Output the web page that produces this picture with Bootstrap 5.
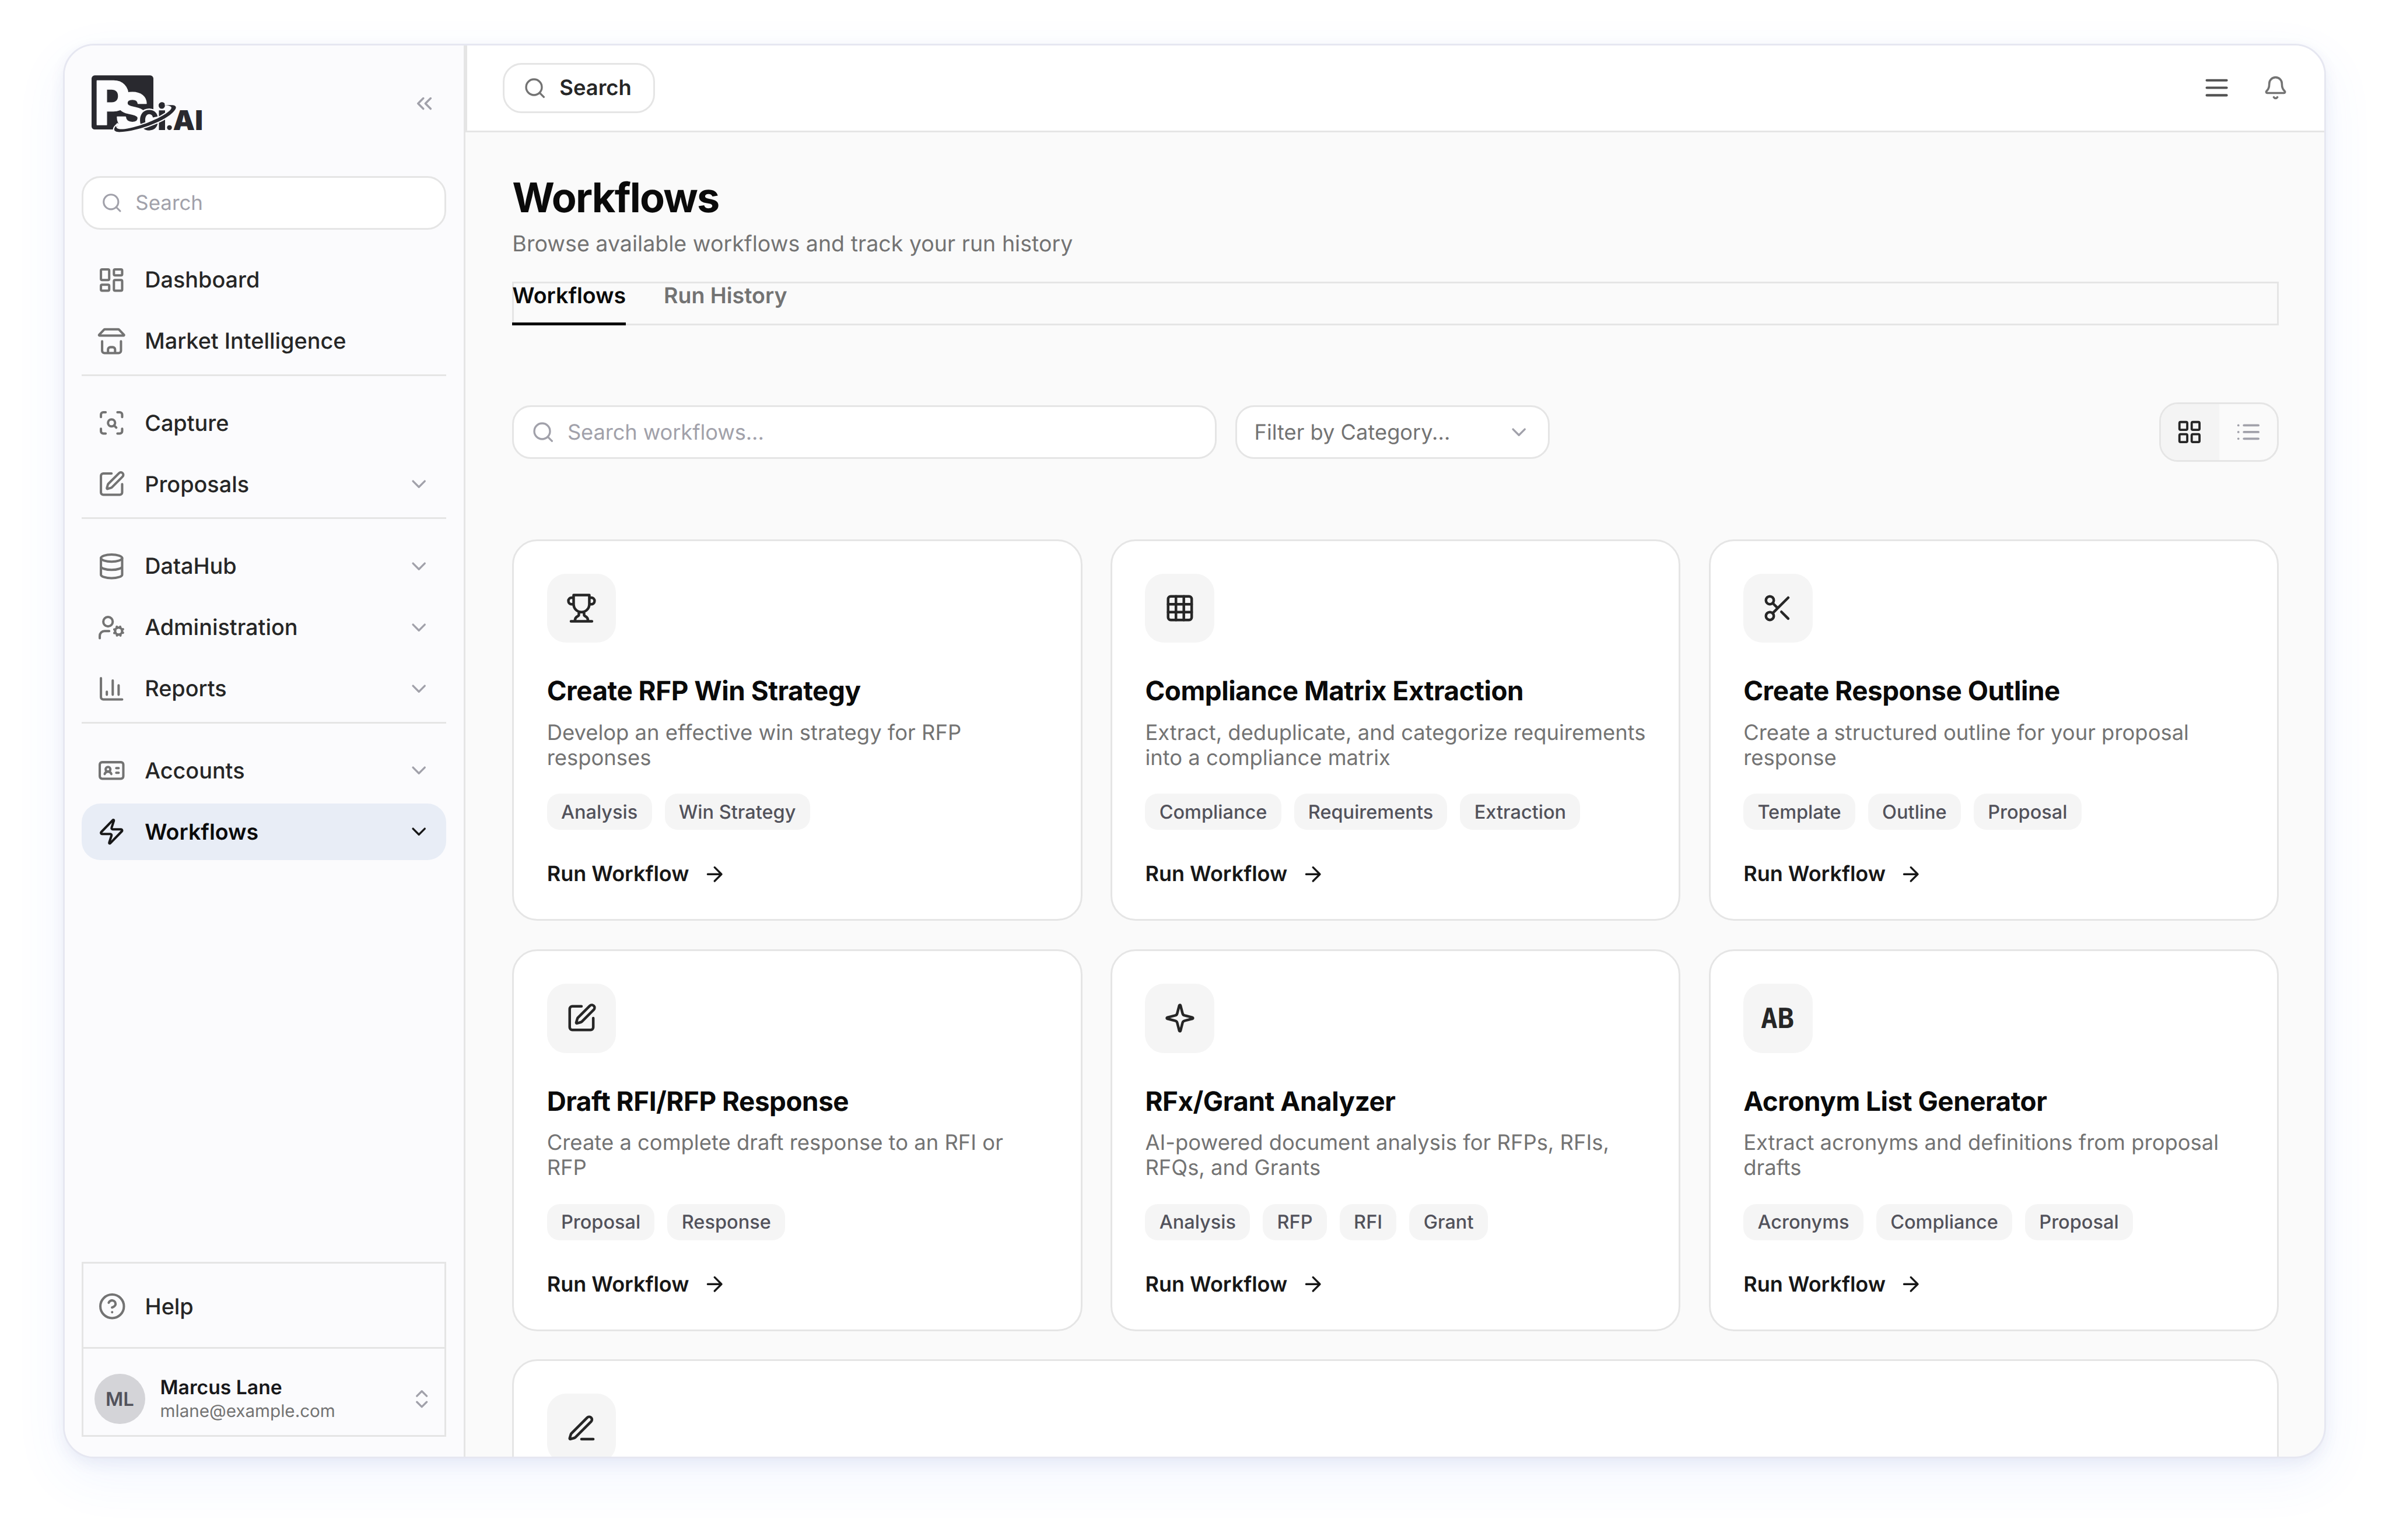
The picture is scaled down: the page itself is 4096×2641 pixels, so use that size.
<!DOCTYPE html>
<html lang="en">
<head>
<meta charset="utf-8">
<meta name="viewport" content="width=device-width, initial-scale=1">
<title>Workflows</title>
<link href="https://cdn.jsdelivr.net/npm/bootstrap@5.3.0/dist/css/bootstrap.min.css" rel="stylesheet">
<style>
  :root { --u: .898246px; --line: #e5e5e5; }
  html { font-size: 43.116px; }
  body { font-family: Inter, "Liberation Sans", sans-serif; color: #262626; background: #fff; width: 4096px; height: 2641px; overflow: hidden; text-rendering: geometricPrecision; line-height: 1.2; }
  .ico { fill: none; stroke: currentColor; stroke-width: 2; stroke-linecap: round; stroke-linejoin: round; flex: none; display: block; }
  .i42 { width: calc(42*var(--u)); height: calc(42*var(--u)); }
  .i45 { width: calc(45*var(--u)); height: calc(45*var(--u)); }
  .i48 { width: calc(48*var(--u)); height: calc(48*var(--u)); }
  .i51 { width: calc(51*var(--u)); height: calc(51*var(--u)); }
  .i54 { width: calc(54*var(--u)); height: calc(54*var(--u)); }
  .i57 { width: calc(57*var(--u)); height: calc(57*var(--u)); stroke-width: 1.9; }
  .i60 { width: calc(60*var(--u)); height: calc(60*var(--u)); }

  .stage { padding: calc(84*var(--u)) calc(120*var(--u)) 0; }
  .app-frame { height: calc(2700*var(--u)); border: 3px solid #e6e7f1; border-radius: calc(60*var(--u)); background: #fafafa; box-shadow: 0 9px 24px rgba(50,70,130,.075), 0 32px 90px rgba(70,125,255,.075); }

  .side { width: calc(765*var(--u)); background: #fbfbfd; border-right: 3px solid var(--line); padding: calc(56*var(--u)) calc(33*var(--u)) calc(38*var(--u)); flex: none; }
  .side-head { padding: 0 calc(18*var(--u)); margin-bottom: calc(84*var(--u)); height: calc(109*var(--u)); }
  .logo { width: calc(210.7*var(--u)); height: calc(109*var(--u)); display: block; overflow: visible; }
  .box { background: #fff; border: 3px solid var(--line); border-radius: calc(36*var(--u)); height: calc(102*var(--u)); padding: 0 calc(33*var(--u)); gap: calc(24*var(--u)); color: #a1a1aa; }
  .box span { padding-top: calc(1.5*var(--u)); }
  .side .box { font-size: calc(38.8*var(--u)); }
  .side-nav { margin-top: calc(42*var(--u)); gap: calc(9*var(--u)); }
  .item { height: calc(108*var(--u)); padding: 0 calc(30*var(--u)); gap: calc(36*var(--u)); border-radius: calc(36*var(--u)); color: #262626; font-size: calc(42.1*var(--u)); font-weight: 500; text-decoration: none; }
  .item span { padding-top: calc(2.5*var(--u)); }
  .item .ico { color: #737373; }
  .item .chev { color: #a1a1aa; margin-left: auto; }
  .item.active { background: #e8edf6; color: #0a0a0a; font-weight: 600; font-size: calc(41.8*var(--u)); }
  .item.active .ico { color: #171717; }
  .rule { height: 3px; background: var(--line); margin-bottom: calc(27*var(--u)); }
  .side-foot { border: 3px solid var(--line); height: calc(333*var(--u)); }
  .help-row { height: calc(162*var(--u)); padding: calc(27*var(--u)) 0 0; border-bottom: 3px solid var(--line); }
  .help-row .item { padding: 0 calc(27*var(--u)); }
  .user-row { padding: calc(48*var(--u)) calc(21*var(--u)) 0; gap: calc(29*var(--u)); }
  .avatar { width: calc(96*var(--u)); height: calc(96*var(--u)); background: #d4d4d8; color: #52525b; font-size: calc(36.5*var(--u)); font-weight: 600; flex: none; }
  .u-name { font-size: calc(37.5*var(--u)); line-height: calc(48*var(--u)); font-weight: 600; color: #18181b; }
  .u-mail { font-size: calc(33*var(--u)); line-height: calc(44*var(--u)); color: #737373; }

  .topbar { height: calc(165*var(--u)); background: #fff; border-left: 3px solid var(--line); border-bottom: 3px solid var(--line); padding: 0 calc(69*var(--u)) 0 calc(68*var(--u)); }
  .top-search { height: calc(96*var(--u)); width: calc(291*var(--u)); padding: 0 calc(36*var(--u)); gap: calc(24*var(--u)); border: 3px solid var(--line); border-radius: calc(36*var(--u)); background: #fff; color: #262626; font-size: calc(40.5*var(--u)); font-weight: 600; }
  .top-icons { gap: calc(60*var(--u)); }
  .content { padding: calc(80*var(--u)) calc(87*var(--u)) 0 calc(89.500*var(--u)); }
  .page-title { font-size: calc(78*var(--u)); line-height: calc(90*var(--u)); font-weight: 700; letter-spacing: -.025em; color: #0a0a0a; margin: 0; }
  .page-sub { font-size: calc(41.850*var(--u)); line-height: calc(60*var(--u)); color: #737373; margin: calc(14*var(--u)) 0 calc(41*var(--u)); }
  .tabs { border: 3px solid var(--line); height: calc(84*var(--u)); gap: calc(72*var(--u)); font-size: calc(41.8*var(--u)); line-height: calc(48*var(--u)); font-weight: 600; color: #737373; }
  .tabs .on { color: #0a0a0a; border-bottom: 5px solid #0a0a0a; margin: 0 0 -3px -3px; }
  .tools { margin-top: calc(147*var(--u)); height: calc(114*var(--u)); gap: calc(36*var(--u)); font-size: calc(40.4*var(--u)); }
  .find { width: calc(1344*var(--u)); }
  .find span { letter-spacing: -.003em; }
  .pick { width: calc(600*var(--u)); color: #737373; }
  .pick .ico { color: #a1a1aa; }
  .views { height: calc(114*var(--u)); width: calc(228*var(--u)); border: 3px solid var(--line); border-radius: calc(36*var(--u)); overflow: hidden; color: #a1a1aa; }
  .views .on { background: #f4f4f4; color: #262626; width: 50%; padding-right: calc(2*var(--u)); }
  .views .off { width: 50%; padding-left: calc(2*var(--u)); }

  .flows { margin-top: calc(147*var(--u)); display: grid; grid-template-columns: repeat(3, 1fr); gap: calc(54*var(--u)); }
  .flow { height: calc(729*var(--u)); background: #fff; border: 3px solid var(--line); border-radius: calc(48*var(--u)); padding: calc(62.7*var(--u)); }
  .flow.wide { grid-column: 1 / -1; }
  .tile { width: calc(132*var(--u)); height: calc(132*var(--u)); border-radius: calc(36*var(--u)); background: #f5f5f5; color: #262626; }
  .ab { font: bold calc(53*var(--u))/1 "DejaVu Sans Mono", monospace; padding: calc(3*var(--u)) calc(2*var(--u)) 0 0; }
  .flow h2 { font-size: calc(51*var(--u)); line-height: calc(60*var(--u)); font-weight: 700; letter-spacing: -.01em; color: #0a0a0a; margin: calc(63.500*var(--u)) 0 calc(24*var(--u)); }
  .flow p { font-size: calc(40.550*var(--u)); line-height: calc(48*var(--u)); height: calc(96*var(--u)); color: #737373; margin: 0 -10px calc(45*var(--u)) 0; }
  .chips { gap: calc(24.5*var(--u)); }
  .chip { height: calc(69*var(--u)); padding: 0 calc(27*var(--u)); border-radius: calc(24*var(--u)); background: #f5f5f5; color: #52525b; font-size: calc(36.2*var(--u)); font-weight: 500; }
  .run { margin-top: calc(54*var(--u)); height: calc(60*var(--u)); gap: calc(26*var(--u)); color: #171717; font-size: calc(40.100*var(--u)); font-weight: 600; text-decoration: none; }
</style>
<script src="https://cdn.jsdelivr.net/npm/bootstrap@5.3.0/dist/js/bootstrap.bundle.min.js"></script>
</head>
<body>
<svg width="0" height="0" class="d-none">
  <symbol id="search" viewBox="0 0 24 24"><circle cx="11" cy="11" r="8"/><path d="m21 21-4.3-4.3"/></symbol>
  <symbol id="chevs" viewBox="0 0 24 24"><path d="m11 17-5-5 5-5M18 17l-5-5 5-5"/></symbol>
  <symbol id="down" viewBox="0 0 24 24"><path d="m6 9 6 6 6-6"/></symbol>
  <symbol id="updown" viewBox="0 0 24 24"><path d="m7 15 5 5 5-5M7 9l5-5 5 5"/></symbol>
  <symbol id="dash" viewBox="0 0 24 24"><rect width="7" height="9" x="3" y="3" rx="1"/><rect width="7" height="5" x="14" y="3" rx="1"/><rect width="7" height="9" x="14" y="12" rx="1"/><rect width="7" height="5" x="3" y="16" rx="1"/></symbol>
  <symbol id="store" viewBox="0 0 24 24"><path d="M6.4 1.900h11.200a1.200 1.200 0 0 1 .9.4L22.500 6.500a.4.4 0 0 1-.3.7H1.800a.4.4 0 0 1-.3-.7L5.500 2.300a1.200 1.200 0 0 1 .9-.4ZM4 12v8a2 2 0 0 0 2 2h12a2 2 0 0 0 2-2v-8M15 22v-3a2 2 0 0 0-2-2h-2a2 2 0 0 0-2 2v3"/></symbol>
  <symbol id="scan" viewBox="0 0 24 24"><path d="M3 7V5a2 2 0 0 1 2-2h2M17 3h2a2 2 0 0 1 2 2v2M21 17v2a2 2 0 0 1-2 2h-2M7 21H5a2 2 0 0 1-2-2v-2"/><circle cx="12" cy="12" r="3"/><path d="m16 16-1.900-1.900"/></symbol>
  <symbol id="edit" viewBox="0 0 24 24"><path d="M12 3H5a2 2 0 0 0-2 2v14a2 2 0 0 0 2 2h14a2 2 0 0 0 2-2v-7"/><path d="M18.375 2.625a1 1 0 0 1 3 3l-9.013 9.014a2 2 0 0 1-.853.505l-2.873.840a.500.500 0 0 1-.620-.620l.840-2.873a2 2 0 0 1 .506-.852z"/></symbol>
  <symbol id="db" viewBox="0 0 24 24"><ellipse cx="12" cy="5" rx="9" ry="3"/><path d="M3 5v14a9 3 0 0 0 18 0V5M3 12a9 3 0 0 0 18 0"/></symbol>
  <symbol id="usercog" viewBox="0 0 24 24"><circle cx="9" cy="7" r="4"/><path d="M10 15H6a4 4 0 0 0-4 4v2"/><circle cx="18" cy="15" r="3"/><path d="m21.700 16.400-.9-.3M15.200 13.900l-.9-.3M16.600 18.700l.3-.9M19.100 12.200l.3-.9M19.600 18.700l-.4-1M16.800 12.300l-.4-1M14.300 16.600l1-.4M20.700 13.800l1-.4"/></symbol>
  <symbol id="chart" viewBox="0 0 24 24"><path d="M3 3v16a2 2 0 0 0 2 2h16M8 17v-2.500M13 17V5M18 17V9"/></symbol>
  <symbol id="idcard" viewBox="0 0 24 24"><rect x="2" y="5" width="20" height="14" rx="2"/><path d="M16 10h2M16 14h2M6.170 15a3 3 0 0 1 5.660 0"/><circle cx="9" cy="11" r="2"/></symbol>
  <symbol id="zap" viewBox="0 0 24 24"><path d="M4 14a1 1 0 0 1-.780-1.630l9.900-10.200a.500.500 0 0 1 .860.460l-1.920 6.020A1 1 0 0 0 13 10h7a1 1 0 0 1 .780 1.630l-9.900 10.200a.500.500 0 0 1-.860-.460l1.920-6.020A1 1 0 0 0 11 14z"/></symbol>
  <symbol id="help" viewBox="0 0 24 24"><circle cx="12" cy="12" r="10"/><path d="M9.090 9a3 3 0 0 1 5.830 1c0 2-3 3-3 3M12 17h.01"/></symbol>
  <symbol id="menu" viewBox="0 0 24 24"><path d="M4 6h16M4 12h16M4 18h16"/></symbol>
  <symbol id="bell" viewBox="0 0 24 24"><path d="M10.268 21a2 2 0 0 0 3.464 0M3.262 15.326A1 1 0 0 0 4 17h16a1 1 0 0 0 .740-1.673C19.410 13.956 18 12.499 18 8A6 6 0 0 0 6 8c0 4.499-1.411 5.956-2.738 7.326"/></symbol>
  <symbol id="grid" viewBox="0 0 24 24"><rect width="7" height="7" x="3" y="3" rx="1"/><rect width="7" height="7" x="14" y="3" rx="1"/><rect width="7" height="7" x="14" y="14" rx="1"/><rect width="7" height="7" x="3" y="14" rx="1"/></symbol>
  <symbol id="list" viewBox="0 0 24 24"><path d="M3 6h.01M3 12h.01M3 18h.01M8 6h13M8 12h13M8 18h13"/></symbol>
  <symbol id="trophy" viewBox="0 0 24 24"><path d="M6 9H4.500a2.500 2.500 0 0 1 0-5H6M18 9h1.500a2.500 2.500 0 0 0 0-5H18M4 22h16M10 14.660V17c0 .550-.470.980-.970 1.210C7.850 18.750 7 20.240 7 22M14 14.660V17c0 .550.470.980.970 1.210C16.150 18.750 17 20.240 17 22M18 2H6v7a6 6 0 0 0 12 0V2Z"/></symbol>
  <symbol id="matrix" viewBox="0 0 24 24"><rect width="18" height="18" x="3" y="3" rx="2"/><path d="M3 9h18M3 15h18M9 3v18M15 3v18"/></symbol>
  <symbol id="scissors" viewBox="0 0 24 24"><circle cx="6" cy="6" r="3"/><path d="M8.120 8.120 12 12M20 4 8.120 15.880"/><circle cx="6" cy="18" r="3"/><path d="M14.800 14.800 20 20"/></symbol>
  <symbol id="sparkle" viewBox="0 0 24 24"><path d="M9.937 15.500A2 2 0 0 0 8.500 14.063l-6.135-1.582a.500.500 0 0 1 0-.962L8.500 9.936A2 2 0 0 0 9.937 8.500l1.582-6.135a.500.500 0 0 1 .963 0L14.063 8.500A2 2 0 0 0 15.500 9.937l6.135 1.581a.500.500 0 0 1 0 .964L15.500 14.063a2 2 0 0 0-1.437 1.437l-1.582 6.135a.500.500 0 0 1-.963 0z"/></symbol>
  <symbol id="pen" viewBox="0 0 24 24"><path d="M12 20h9M16.376 3.622a1 1 0 0 1 3.002 3.002L7.368 18.635a2 2 0 0 1-.855.506l-2.872.838a.500.500 0 0 1-.620-.620l.838-2.872a2 2 0 0 1 .506-.854z"/></symbol>
  <symbol id="arrow" viewBox="0 0 24 24"><path d="M5 12h14M12 5l7 7-7 7"/></symbol>
</svg>

<div class="stage">
  <div class="app-frame d-flex overflow-hidden">
    <aside class="side d-flex flex-column">
      <div class="side-head d-flex align-items-center justify-content-between">
        <svg class="logo" viewBox="72 70 632 327" font-family="Inter, sans-serif" font-weight="800" fill="#29292f">
          <rect x="72" y="71" width="354" height="310" rx="18"/>
          <g fill="#fcfcfe" stroke="#fcfcfe" stroke-width="5" stroke-linejoin="round">
            <path d="M216 345L300 360L290 386L226 386Z" stroke="none"/>
            <text x="0" y="0" font-size="346" transform="translate(85 354) scale(.92 1)">P</text>
            <text x="0" y="0" font-size="284" transform="translate(209 378) scale(1.01 1)">S</text>
            <circle cx="402" cy="328" r="68" stroke="none"/>
          </g>
          <path d="M247 336H283C285 352 296 357 309 357C322 357 329 349 329 339C329 328 319 322 304 317L238 290L218 253H160V336Z" fill="none"/>
          <text x="342" y="384" font-size="208" font-weight="700" textLength="116" lengthAdjust="spacingAndGlyphs">c</text>
          <text x="446" y="384" font-size="206">i</text>
          <circle cx="518" cy="370" r="14"/>
          <text x="538" y="384" font-size="156" textLength="172" lengthAdjust="spacingAndGlyphs" font-weight="900">AI</text>
          <path d="M213 360C192 380 200 398 240 395C340 388 478 338 532 288C566 258 560 241 530 241L490 241C526 244 542 252 518 274C470 318 340 368 262 378C226 382 212 376 213 360Z" stroke="#fcfcfe" stroke-width="14" paint-order="stroke"/>
          <circle cx="474" cy="244" r="18"/>
        </svg>
        <svg class="ico i48" style="color:#a1a1aa"><use href="#chevs"/></svg>
      </div>
      <div class="box d-flex align-items-center"><svg class="ico i42"><use href="#search"/></svg><span>Search</span></div>

      <nav class="side-nav nav flex-column flex-nowrap">
        <a class="item d-flex align-items-center"><svg class="ico i54"><use href="#dash"/></svg><span>Dashboard</span></a>
        <a class="item d-flex align-items-center"><svg class="ico i54"><use href="#store"/></svg><span>Market Intelligence</span></a>
        <div class="rule"></div>
        <a class="item d-flex align-items-center"><svg class="ico i54"><use href="#scan"/></svg><span>Capture</span></a>
        <a class="item d-flex align-items-center"><svg class="ico i54"><use href="#edit"/></svg><span>Proposals</span><svg class="ico i45 chev"><use href="#down"/></svg></a>
        <div class="rule"></div>
        <a class="item d-flex align-items-center"><svg class="ico i54"><use href="#db"/></svg><span>DataHub</span><svg class="ico i45 chev"><use href="#down"/></svg></a>
        <a class="item d-flex align-items-center"><svg class="ico i54"><use href="#usercog"/></svg><span>Administration</span><svg class="ico i45 chev"><use href="#down"/></svg></a>
        <a class="item d-flex align-items-center"><svg class="ico i54"><use href="#chart"/></svg><span>Reports</span><svg class="ico i45 chev"><use href="#down"/></svg></a>
        <div class="rule"></div>
        <a class="item d-flex align-items-center"><svg class="ico i54"><use href="#idcard"/></svg><span>Accounts</span><svg class="ico i45 chev"><use href="#down"/></svg></a>
        <a class="item active d-flex align-items-center"><svg class="ico i54"><use href="#zap"/></svg><span>Workflows</span><svg class="ico i45 chev"><use href="#down"/></svg></a>
      </nav>

      <div class="side-foot mt-auto">
        <div class="help-row"><a class="item d-flex align-items-center"><svg class="ico i54"><use href="#help"/></svg><span>Help</span></a></div>
        <div class="user-row d-flex align-items-center">
          <div class="avatar rounded-circle d-flex align-items-center justify-content-center">ML</div>
          <div class="flex-grow-1"><div class="u-name">Marcus Lane</div><div class="u-mail">mlane@example.com</div></div>
          <svg class="ico i45" style="color:#a1a1aa"><use href="#updown"/></svg>
        </div>
      </div>
    </aside>

    <div class="flex-grow-1 d-flex flex-column">
      <header class="topbar d-flex align-items-center justify-content-between flex-shrink-0">
        <div class="top-search d-flex align-items-center"><svg class="ico i45" style="color:#737373"><use href="#search"/></svg><span>Search</span></div>
        <div class="top-icons d-flex align-items-center">
          <svg class="ico i57" style="color:#525252"><use href="#menu"/></svg>
          <svg class="ico i48" style="color:#737373"><use href="#bell"/></svg>
        </div>
      </header>

      <main class="content">
        <h1 class="page-title">Workflows</h1>
        <p class="page-sub">Browse available workflows and track your run history</p>
        <div class="tabs d-flex"><div class="on">Workflows</div><div>Run History</div></div>

        <div class="tools d-flex align-items-center">
          <div class="box find d-flex align-items-center"><svg class="ico i45"><use href="#search"/></svg><span>Search workflows...</span></div>
          <div class="box pick d-flex align-items-center justify-content-between"><span>Filter by Category...</span><svg class="ico i45"><use href="#down"/></svg></div>
          <div class="views d-flex ms-auto">
            <div class="on d-flex align-items-center justify-content-center"><svg class="ico i51"><use href="#grid"/></svg></div>
            <div class="off d-flex align-items-center justify-content-center"><svg class="ico i51"><use href="#list"/></svg></div>
          </div>
        </div>

        <div class="flows">
          <article class="flow">
            <div class="tile d-flex align-items-center justify-content-center"><svg class="ico i60"><use href="#trophy"/></svg></div>
            <h2>Create RFP Win Strategy</h2>
            <p>Develop an effective win strategy for RFP<br>responses</p>
            <div class="chips d-flex"><span class="chip d-flex align-items-center">Analysis</span><span class="chip d-flex align-items-center">Win Strategy</span></div>
            <a class="run d-flex align-items-center">Run Workflow<svg class="ico i45"><use href="#arrow"/></svg></a>
          </article>
          <article class="flow">
            <div class="tile d-flex align-items-center justify-content-center"><svg class="ico i60"><use href="#matrix"/></svg></div>
            <h2>Compliance Matrix Extraction</h2>
            <p>Extract, deduplicate, and categorize requirements<br>into a compliance matrix</p>
            <div class="chips d-flex"><span class="chip d-flex align-items-center">Compliance</span><span class="chip d-flex align-items-center">Requirements</span><span class="chip d-flex align-items-center">Extraction</span></div>
            <a class="run d-flex align-items-center">Run Workflow<svg class="ico i45"><use href="#arrow"/></svg></a>
          </article>
          <article class="flow">
            <div class="tile d-flex align-items-center justify-content-center"><svg class="ico i60"><use href="#scissors"/></svg></div>
            <h2>Create Response Outline</h2>
            <p>Create a structured outline for your proposal<br>response</p>
            <div class="chips d-flex"><span class="chip d-flex align-items-center">Template</span><span class="chip d-flex align-items-center">Outline</span><span class="chip d-flex align-items-center">Proposal</span></div>
            <a class="run d-flex align-items-center">Run Workflow<svg class="ico i45"><use href="#arrow"/></svg></a>
          </article>
          <article class="flow">
            <div class="tile d-flex align-items-center justify-content-center"><svg class="ico i60"><use href="#edit"/></svg></div>
            <h2>Draft RFI/RFP Response</h2>
            <p>Create a complete draft response to an RFI or<br>RFP</p>
            <div class="chips d-flex"><span class="chip d-flex align-items-center">Proposal</span><span class="chip d-flex align-items-center">Response</span></div>
            <a class="run d-flex align-items-center">Run Workflow<svg class="ico i45"><use href="#arrow"/></svg></a>
          </article>
          <article class="flow">
            <div class="tile d-flex align-items-center justify-content-center"><svg class="ico i60"><use href="#sparkle"/></svg></div>
            <h2>RFx/Grant Analyzer</h2>
            <p>AI-powered document analysis for RFPs, RFIs,<br>RFQs, and Grants</p>
            <div class="chips d-flex"><span class="chip d-flex align-items-center">Analysis</span><span class="chip d-flex align-items-center">RFP</span><span class="chip d-flex align-items-center">RFI</span><span class="chip d-flex align-items-center">Grant</span></div>
            <a class="run d-flex align-items-center">Run Workflow<svg class="ico i45"><use href="#arrow"/></svg></a>
          </article>
          <article class="flow">
            <div class="tile d-flex align-items-center justify-content-center"><span class="ab">AB</span></div>
            <h2>Acronym List Generator</h2>
            <p>Extract acronyms and definitions from proposal<br>drafts</p>
            <div class="chips d-flex"><span class="chip d-flex align-items-center">Acronyms</span><span class="chip d-flex align-items-center">Compliance</span><span class="chip d-flex align-items-center">Proposal</span></div>
            <a class="run d-flex align-items-center">Run Workflow<svg class="ico i45"><use href="#arrow"/></svg></a>
          </article>
          <article class="flow wide">
            <div class="tile d-flex align-items-center justify-content-center"><svg class="ico i60"><use href="#pen"/></svg></div>
          </article>
        </div>
      </main>
    </div>
  </div>
</div>
</body>
</html>
